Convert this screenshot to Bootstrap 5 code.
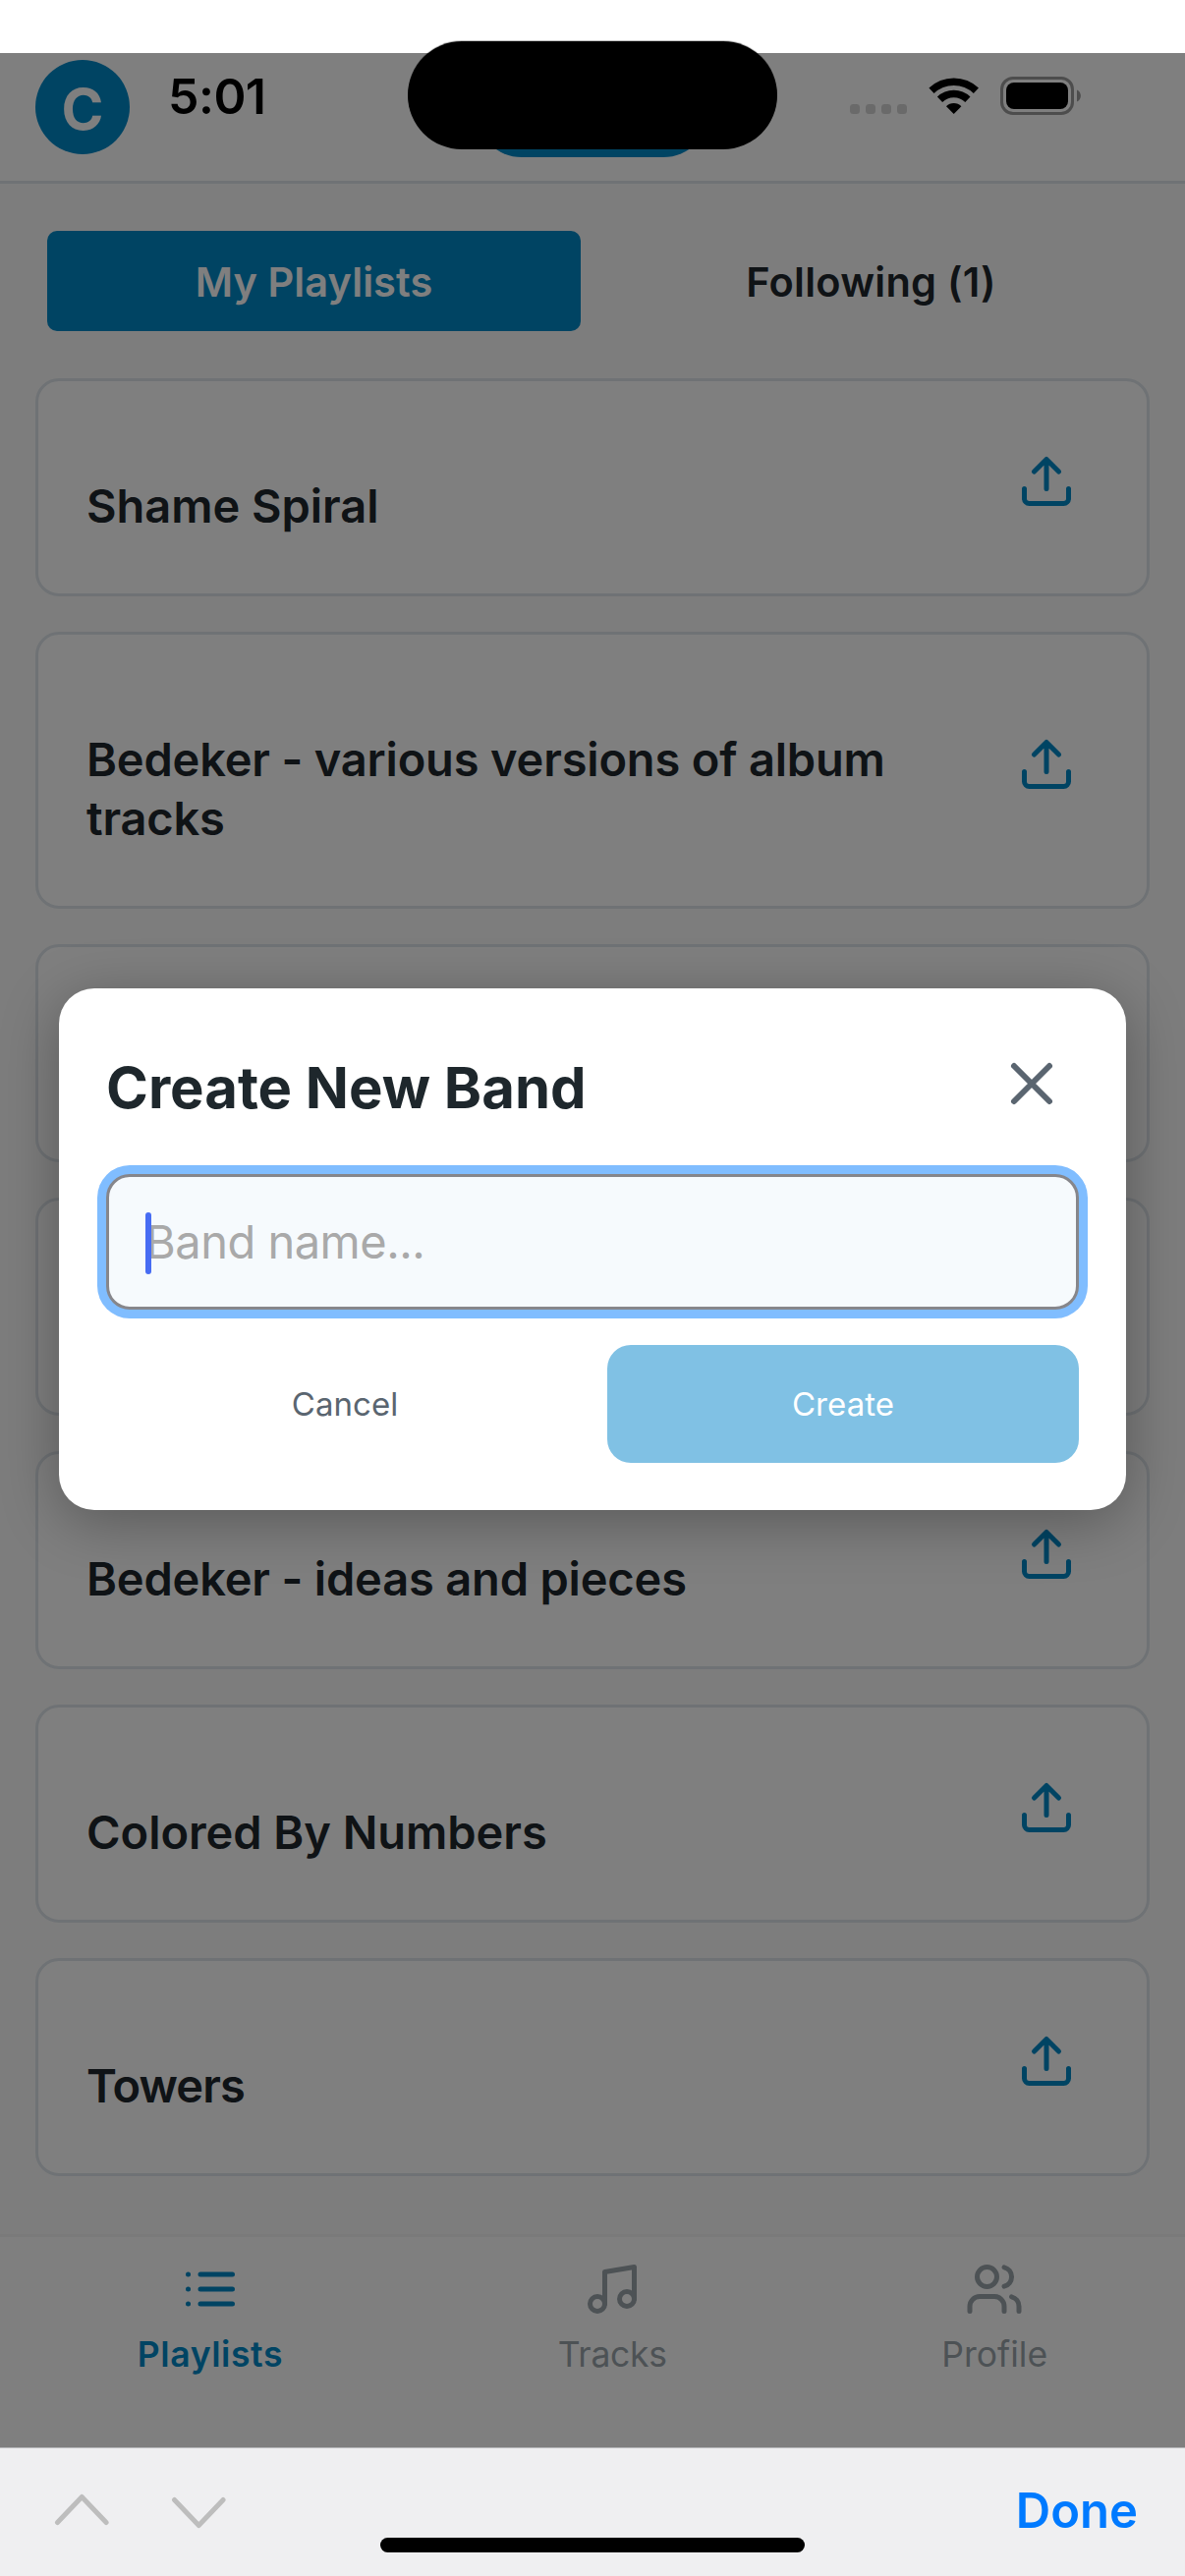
<!DOCTYPE html>
<html lang="en">
<head>
<meta charset="utf-8">
<meta name="viewport" content="width=device-width, initial-scale=1">
<title>Playlists</title>
<link rel="stylesheet" href="https://cdn.jsdelivr.net/npm/bootstrap@5.3.0/dist/css/bootstrap.min.css">
<style>
:root { --brand:#0088c7; --ink:#1e272c; --slate:#5a6570; --line:#dee5ea; }
body { font-family: Inter, "Liberation Sans", sans-serif; background:#fbfbfb; color:var(--ink); overflow:hidden; }
.screen { height:2622px; width:1206px; }
.app-header { height:187px; padding:61px 36px 0; border-bottom:3px solid var(--line); }
.avatar { width:96px; height:96px; background:var(--brand); font-size:58px; padding-top:4px; }
.header-end { width:96px; }
.band-pill { width:238px; height:99px; background:var(--brand); border-radius:47px; }
.tab-row { padding:48px 48px; gap:24px; height:198px; }
.tab-row .btn { height:102px; border-radius:10px; font-size:41.5px; font-weight:600; padding:2px 0 0; border:0; color:var(--ink); letter-spacing:.25px; }
.tab-row .btn.active { background:var(--brand); color:#fff; letter-spacing:.1px; }
.stack { gap:36px; padding:0 36px; }
.playlist { border:3px solid var(--line); border-radius:24px; background:#fff; padding:97px 72px 59px 49px; }
.playlist h2 { font-size:47px; line-height:60px; font-weight:600; width:860px; margin:0; letter-spacing:-.05px; }
.playlist .snug { letter-spacing:-.18px; }
.playlist .tight { letter-spacing:-.9px; }
.share { width:60px; height:60px; margin:-36px 0 14px; color:var(--brand); }
.ic { fill:none; stroke:currentColor; stroke-width:2; stroke-linecap:round; stroke-linejoin:round; }
.tabbar { margin-top:auto; height:217px; border-top:3px solid #f5f5f5; background:#fff; padding-top:23px; color:#9aa4ab; }
.tabbar .item { gap:13px; font-size:35.5px; line-height:48px; }
.tabbar .item svg { width:60px; height:60px; }
.tabbar .on { color:var(--brand); font-weight:600; letter-spacing:.6px; }
.tabbar .mid { letter-spacing:-.3px; }
.keybar { height:131px; background:#efeff1; border-top:1px solid #b9b9bb; padding:0 48px 0 54px; position:relative; z-index:3; }
.keybar svg { margin-top:44px; }
.keybar .done { font-size:49px; font-weight:600; line-height:60px; color:#007aff; margin-top:34px; }
.home-bar { width:432px; height:15px; border-radius:8px; background:#000; left:387px; top:91px; }
.dim { top:54px; left:0; width:1206px; height:2437px; background:rgba(0,0,0,.5); z-index:1; padding-bottom:3px; }
.dialog-box { width:1086px; height:531px; background:#fff; border-radius:36px; padding:48px; box-shadow:0 12px 60px rgba(0,0,0,.3); }
.dialog-head { height:96px; margin-bottom:45px; }
.dialog-head h1 { font-size:58px; font-weight:700; line-height:72px; margin:11px 0 0 0; }
.dialog-head svg { width:72px; height:72px; margin:2px 12px 0 0; color:var(--slate); }
.field { height:138px; margin-bottom:36px; }
.field input { height:138px; border:3px solid #86868b; border-radius:24px; background:#f6fafd; font-size:47px; letter-spacing:-.5px; padding:0 37px; box-shadow:0 0 0 9px #80bdff; }
.field input::placeholder { color:#a9a9a9; opacity:1; }
.caret { width:6px; height:63px; border-radius:3px; background:#476cf3; left:40px; top:39px; }
.actions { gap:24px; }
.actions .btn { height:120px; border:0; border-radius:24px; font-size:33px; letter-spacing:.05px; padding:2px 0 0; }
.b-cancel { width:486px; color:var(--slate); }
.b-create { width:480px; background:#80c1e4; color:#fff; }
.status { z-index:4; left:0; top:0; width:1206px; height:187px; color:#000; }
.status .clock { position:absolute; left:171px; top:68px; font-size:50px; font-weight:600; line-height:60px; letter-spacing:-.5px; }
.island { position:absolute; left:415px; top:42px; width:376px; height:110px; border-radius:55px; background:#000; box-shadow:0 -1px 0 rgba(0,0,0,.25); }
.status svg { position:absolute; left:860px; top:70px; }
</style>
</head>
<body>
<svg width="0" height="0" class="position-absolute">
  <symbol id="up" viewBox="0 0 24 24"><path d="M21 15v4a2 2 0 0 1-2 2H5a2 2 0 0 1-2-2v-4M17 8l-5-5-5 5M12 3v12"/></symbol>
</svg>
<div class="screen d-flex flex-column position-relative">
  <header class="app-header bg-white d-flex justify-content-between align-items-start">
    <div class="avatar rounded-circle text-white fw-bold d-flex align-items-center justify-content-center lh-1">C</div>
    <div class="band-pill"></div>
    <div class="header-end"></div>
  </header>
  <nav class="tab-row d-flex">
    <button class="btn active flex-fill w-50">My Playlists</button>
    <button class="btn flex-fill w-50">Following (1)</button>
  </nav>
  <main class="stack d-flex flex-column">
    <div class="playlist d-flex justify-content-between align-items-center"><h2>Shame Spiral</h2><svg class="share ic"><use href="#up"/></svg></div>
    <div class="playlist d-flex justify-content-between align-items-center"><h2 class="snug">Bedeker - various versions of album tracks</h2><svg class="share ic"><use href="#up"/></svg></div>
    <div class="playlist d-flex justify-content-between align-items-center"><h2>&nbsp;</h2></div>
    <div class="playlist d-flex justify-content-between align-items-center"><h2>&nbsp;</h2></div>
    <div class="playlist d-flex justify-content-between align-items-center"><h2 class="snug">Bedeker - ideas and pieces</h2><svg class="share ic"><use href="#up"/></svg></div>
    <div class="playlist d-flex justify-content-between align-items-center"><h2>Colored By Numbers</h2><svg class="share ic"><use href="#up"/></svg></div>
    <div class="playlist d-flex justify-content-between align-items-center"><h2 class="tight">Towers</h2><svg class="share ic"><use href="#up"/></svg></div>
  </main>
  <nav class="tabbar d-flex justify-content-around align-items-start">
    <div class="item on d-flex flex-column align-items-center">
      <svg class="ic" viewBox="0 0 24 24"><path d="M8 6h13M8 12h13M8 18h13M3 6h.01M3 12h.01M3 18h.01"/></svg><span>Playlists</span>
    </div>
    <div class="item mid d-flex flex-column align-items-center">
      <svg class="ic" viewBox="0 0 24 24"><path d="M9 18V5l12-2v13"/><circle cx="6" cy="18" r="3"/><circle cx="18" cy="16" r="3"/></svg><span>Tracks</span>
    </div>
    <div class="item d-flex flex-column align-items-center">
      <svg class="ic" viewBox="0 0 24 24"><path d="M16 21v-2a4 4 0 0 0-4-4H6a4 4 0 0 0-4 4v2M22 21v-2a4 4 0 0 0-3-3.87M16 3.13a4 4 0 0 1 0 7.75"/><circle cx="9" cy="7" r="4"/></svg><span>Profile</span>
    </div>
  </nav>
  <footer class="keybar d-flex justify-content-between align-items-start">
    <svg width="180" height="40" viewBox="54 2536 180 40" fill="none" stroke="#bdbdbd" stroke-width="5" stroke-linecap="round" stroke-linejoin="round"><path d="M58.500 2567.500 83.300 2541.500 108.100 2567.500M177.500 2544.500 202.300 2570.500 227.100 2544.500"/></svg>
    <span class="done">Done</span>
    <div class="home-bar position-absolute"></div>
  </footer>

  <div class="dim position-absolute d-flex align-items-center justify-content-center">
    <section class="dialog-box" role="dialog">
      <div class="dialog-head d-flex justify-content-between align-items-center">
        <h1>Create New Band</h1>
        <svg class="ic" viewBox="0 0 24 24"><path d="M18 6 6 18M6 6l12 12"/></svg>
      </div>
      <div class="field position-relative">
        <input class="form-control" type="text" placeholder="Band name...">
        <span class="caret position-absolute"></span>
      </div>
      <div class="actions d-flex">
        <button class="btn b-cancel">Cancel</button>
        <button class="btn b-create">Create</button>
      </div>
    </section>
  </div>

  <div class="status position-absolute">
    <span class="clock">5:01</span>
    <div class="island"></div>
    <svg width="250" height="60" viewBox="860 70 250 60">
      <g fill="#6a6a6a"><rect x="865" y="106" width="10" height="10" rx="3.500"/><rect x="881" y="106" width="10" height="10" rx="3.500"/><rect x="897" y="106" width="10" height="10" rx="3.500"/><rect x="913" y="106" width="10" height="10" rx="3.500"/></g>
      <g fill="none" stroke="#000" stroke-width="7.500"><path d="M948 92.200A33 33 0 0 1 993.400 92.200"/><path d="M956.500 101.300A20.500 20.500 0 0 1 984.900 101.300"/></g>
      <path d="M970.700 116 963 108.200A11 11 0 0 1 978.400 108.200Z"/>
      <rect x="1019.500" y="79.500" width="72" height="36" rx="11.500" fill="none" stroke="#4d4d4d" stroke-width="3"/>
      <rect x="1024" y="84" width="63" height="27" rx="8"/>
      <path d="M1096 91.500C1101.200 93.500 1101.200 101.500 1096 103.500Z" fill="#4d4d4d"/>
    </svg>
  </div>
</div>
<script src="https://cdn.jsdelivr.net/npm/bootstrap@5.3.0/dist/js/bootstrap.bundle.min.js"></script>
</body>
</html>
